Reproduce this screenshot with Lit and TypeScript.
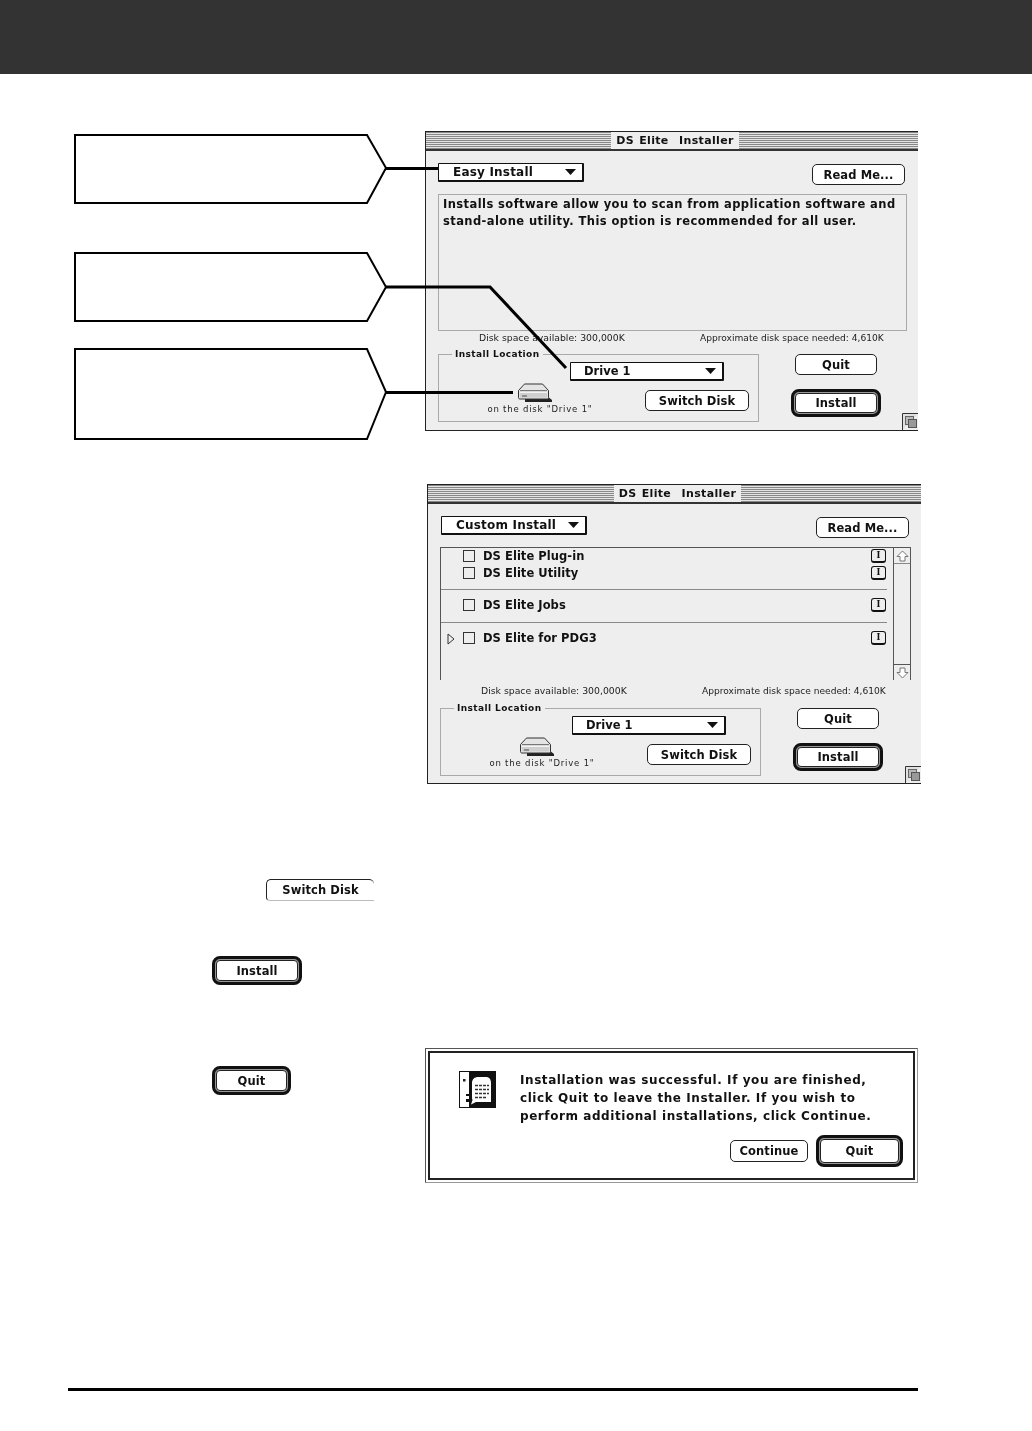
import { LitElement, html, css } from "lit";
import { customElement } from "lit/decorators.js";

const arrow = html`<svg class="caret" width="11" height="6" viewBox="0 0 11 6"><path d="M0 0H11L5.5 6Z" fill="#111"/></svg>`;

const driveIcon = html`<svg class="hd" width="36" height="20" viewBox="0 0 36 20">
  <path d="M30 13L35 17V19H8V15Z" fill="#222"/>
  <path d="M7 1.5C7 1 7.500 1 8 1H25.500L31.500 7.500V14.500C31.500 15.500 31 16 30 16H3C2 16 1.500 15.500 1.500 14.500V7.500Z" fill="#e4e4e4" stroke="#333"/>
  <path d="M3 7.500H30" stroke="#777"/>
  <path d="M3 8.500H30V14.500H3Z" fill="#cfcfcf"/>
  <path d="M3 9.500H30" stroke="#f4f4f4"/>
  <path d="M5 13H10" stroke="#777" stroke-width="1.500"/>
</svg>`;

const docIcon = html`<svg width="37" height="37" viewBox="0 0 37 37">
  <rect width="37" height="37" fill="#111"/>
  <path d="M1 1H10V23H7V25H10V28H7V31H10V36H1Z" fill="#fff"/>
  <rect x="4" y="8" width="2.500" height="2.500" fill="#222"/>
  <path d="M13 12C13 8 16 6 19 6H27C30 6 32 8 32 12V31H17L12 33.500L13.500 29C13 28 13 27 13 26Z" fill="#fff"/>
  <path d="M16 14.500H30M16 18.500H30M16 22.500H30M16 26.500H27" stroke="#333" stroke-dasharray="3 1" stroke-width="1.300"/>
</svg>`;

const growBox = html`<svg class="grow" width="16" height="17" viewBox="0 0 16 17">
  <path d="M0.500 17V0.500H16" fill="#e0e0e0" stroke="#333"/>
  <rect x="3.500" y="3.500" width="8" height="8" fill="#bbb" stroke="#666"/>
  <rect x="6.500" y="6.500" width="8" height="8" fill="#999" stroke="#555"/>
</svg>`;

const upArrow = html`<svg width="13" height="12" viewBox="0 0 13 12"><path d="M6.500 1L12 6.500H9V11H4V6.500H1Z" fill="#fff" stroke="#777"/></svg>`;
const downArrow = html`<svg width="13" height="12" viewBox="0 0 13 12"><path d="M6.500 11L12 5.500H9V1H4V5.500H1Z" fill="#fff" stroke="#777"/></svg>`;

@customElement("app-root")
export class AppRoot extends LitElement {
  static styles = css`
    :host { display: block; width: 1032px; height: 1431px; background: #fff; overflow: hidden;
      font-family: "DejaVu Sans", sans-serif; color: #111; }
    .header { height: 74px; background: #333; }
    .main { padding: 57px 0 0 68px; width: 850px; }

    .row1 { position: relative; display: flex; height: 300px; }
    .callouts { width: 357px; flex: none; display: flex; flex-direction: column; padding-top: 3px; align-self: flex-start; }
    .callout { display: block; flex: none; margin-left: 6px; }
    .c2 { margin-top: 47px; }
    .c3 { margin-top: 25px; }
    .lines { position: absolute; left: 0; top: 0; z-index: 2; pointer-events: none; }

    .window { position: relative; width: 493px; height: 300px; box-sizing: border-box; flex: none; background: #eee;
      border: 1px solid #222; border-right: 0; filter: blur(0.35px); }
    .w2 { margin: 53px 0 0 359px; width: 494px; }
    .title { height: 17px; border-bottom: 2px solid #333; display: flex; align-items: center; padding-left: 6px;
      background: repeating-linear-gradient(#888 0 1px, #e4e4e4 1px 2px); justify-content: center; }
    .title span { background: #eee; padding: 0 5px; font-weight: 700; font-size: 11px; letter-spacing: 0.35px; word-spacing: 1px; line-height: 17px; white-space: pre; }
    .body { padding: 12px 11px 0 12px; }
    .top { display: flex; justify-content: space-between; align-items: flex-start; height: 22px; }
    .popup { box-sizing: border-box; height: 19px; background: #fff; border: 1px solid #111; border-width: 1px 2px 2px 1px;
      border-radius: 1px; display: flex; align-items: center; justify-content: space-between;
      font-weight: 700; font-size: 12px; letter-spacing: 0.2px; }
    .p-easy { width: 146px; padding: 0 6px 0 14px; }
    .p-drive { width: 154px; padding: 0 6px 0 13px; font-size: 11.5px; letter-spacing: 0; }
    .caret { flex: none; }
    .btn { box-sizing: border-box; background: #fff; border: 1px solid #222; border-radius: 5px; display: flex;
      align-items: center; justify-content: center; font-weight: 700; font-size: 11.5px; letter-spacing: 0.1px; }
    .readme { width: 93px; height: 21px; margin: 1px 2px 0 0; }
    .w2 .top { padding-left: 1px; }
    .w2 .readme { margin-right: 1px; }
    .box { box-sizing: border-box; margin-top: 9px; height: 137px; width: 469px; border: 1.5px solid #aaa;
      padding: 1px 4px 0; font-weight: 700; font-size: 11.5px; line-height: 16.5px; letter-spacing: 0.42px; white-space: pre; }
    .stats { display: flex; height: 13px; margin-top: 1px; font-size: 9.3px; line-height: 13px; color: #222; padding-left: 41px; white-space: pre; }
    .stats .l { width: 221px; flex: none; margin-top: -1px; }
    .stats .r { font-size: 9.1px; }
    .bottom { display: flex; margin-top: 9px; }
    .w2 .bottom { margin-top: 10px; }
    .group { position: relative; box-sizing: border-box; width: 321px; height: 68px; border: 1.5px solid #aaa; flex: none; }
    .legend { position: absolute; left: 13px; top: -7px; padding: 0 3px; background: #eee; font-weight: 700; font-size: 9px; line-height: 12px; letter-spacing: 0.4px; }
    .g-top { display: flex; padding: 7px 0 0 131px; }
    .g-bot { display: flex; justify-content: space-between; padding: 2px 9px 0 48px; }
    .drive { width: 106px; display: flex; flex-direction: column; align-items: center; font-size: 8.5px; line-height: 12px; letter-spacing: 0.8px; color: #222; white-space: pre; }
    .hd { margin: 0 10px 0 0; }
    .switch { width: 104px; height: 21px; margin-top: 7px; }
    .side { display: flex; flex-direction: column; align-items: center; width: 90px; margin-left: 32px; }
    .quit { width: 82px; height: 21px; flex: none; }
    .ring { box-sizing: border-box; border: 3px solid #111; border-radius: 8px; background: #999; padding: 1px; display: flex; }
    .ring .btn { flex: 1; border-radius: 4px; }
    .install-ring { width: 90px; height: 28px; margin-top: 14px; flex: none; }
    .grow { position: absolute; right: 0; bottom: 0; }

    .list { box-sizing: border-box; position: relative; display: flex; margin-top: 9px; height: 133px; width: 471px; margin-bottom: 5px;
      border: 1.5px solid #555; border-width: 1.5px 1.5px 0; }
    .items { flex: 1; padding: 0 6px 0 0; }
    .grp { border-bottom: 1px solid #888; padding: 7px 0 8.5px; }
    .grp:first-child { padding: 0 0 7.5px; }
    .grp:last-child { border-bottom: 0; }
    .item { display: flex; align-items: center; height: 16.5px; padding-left: 22px; font-weight: 700; font-size: 11.5px; letter-spacing: 0.05px; position: relative; }
    .cb { width: 10px; height: 10px; border: 1px solid #333; background: #eee; margin-right: 8px; flex: none; }
    .info { margin-left: auto; width: 15px; height: 14px; box-sizing: border-box; border: 1.5px solid #111; border-bottom-width: 2.5px; border-radius: 3px; background: #eee;
      font-family: "Liberation Serif", serif; font-weight: 700; font-size: 10px; line-height: 10px; text-align: center; letter-spacing: 0; margin-right: 1px; flex: none; }
    .tri { position: absolute; left: 6px; top: 3px; }
    .scroll { width: 16px; flex: none; border-left: 1.5px solid #555; display: flex; flex-direction: column; justify-content: space-between; align-items: center; }
    .scroll div { width: 100%; height: 15px; display: flex; align-items: center; justify-content: center; }
    .scroll .u { border-bottom: 1px solid #888; }
    .scroll .d { border-top: 1px solid #555; }

    .row3 { padding-top: 95px; filter: blur(0.3px); }
    .switch-solo { box-sizing: border-box; width: 108px; height: 22px; margin-left: 198px; border: 1px solid #222; border-right: 0; border-bottom-color: #bbb; border-radius: 5px 5px 0 4px; }
    .install-solo { width: 90px; height: 29px; margin: 55px 0 0 144px; }
    .row4 { display: flex; margin-top: 63px; }
    .quit-solo { width: 79px; height: 29px; margin: 18px 0 0 144px; flex: none; filter: blur(0.3px); }
    .alert { box-sizing: border-box; width: 493px; height: 135px; margin-left: 134px; border: 1px solid #555; border-bottom-color: #999; border-right-color: #999; padding: 2px; flex: none; filter: blur(0.3px); }
    .alert-in { box-sizing: border-box; height: 100%; border: 2px solid #222; padding: 18px 10px 0 29px; position: relative; }
    .alert-msg { display: flex; }
    .alert-msg svg { flex: none; }
    .msg { margin-left: 24px; font-weight: 700; font-size: 12px; line-height: 18px; letter-spacing: 0.57px; white-space: pre; }
    .alert-btns { display: flex; justify-content: flex-end; align-items: center; gap: 8px; margin-top: 10px; }
    .cont { width: 78px; height: 22px; }
    .quit-big { width: 87px; height: 32px; }
    .rule { height: 3px; background: #000; margin-top: 205px; }
  `;

  private bottom(disk: string) {
    return html`
      <div class="stats"><span class="l">Disk space available: 300,000K</span><span class="r">Approximate disk space needed: 4,610K</span></div>
      <div class="bottom">
        <div class="group">
          <span class="legend">Install Location</span>
          <div class="g-top"><div class="popup p-drive">Drive 1 ${arrow}</div></div>
          <div class="g-bot">
            <div class="drive">${driveIcon}<span>on the disk "${disk}"</span></div>
            <div class="btn switch">Switch Disk</div>
          </div>
        </div>
        <div class="side">
          <div class="btn quit">Quit</div>
          <div class="ring install-ring"><div class="btn">Install</div></div>
        </div>
      </div>
      `;
  }

  private item(label: string, tri = false) {
    return html`<div class="item">
      ${tri ? html`<svg class="tri" width="8" height="12" viewBox="0 0 8 12"><path d="M1 1L7 6L1 11Z" fill="none" stroke="#333"/></svg>` : ""}
      <span class="cb"></span>${label}<span class="info">I</span>
    </div>`;
  }

  render() {
    return html`
      <div class="header"></div>
      <div class="main">
        <section class="row1">
          <div class="callouts">
            <svg class="callout" width="314" height="71" viewBox="0 0 314 71"><path d="M1 1H293L312 34L293 69H1Z" fill="#fff" stroke="#000" stroke-width="2"/></svg>
            <svg class="callout c2" width="314" height="71" viewBox="0 0 314 71"><path d="M1 1H293L312 35L293 69H1Z" fill="#fff" stroke="#000" stroke-width="2"/></svg>
            <svg class="callout c3" width="314" height="94" viewBox="0 0 314 94"><path d="M1 1H293L312 44L293 91H1Z" fill="#fff" stroke="#000" stroke-width="2"/></svg>
          </div>
          <div class="window">
            <div class="title"><span>DS Elite  Installer</span></div>
            <div class="body">
              <div class="top"><div class="popup p-easy">Easy Install ${arrow}</div><div class="btn readme">Read Me...</div></div>
              <div class="box">Installs software allow you to scan from application software and
stand-alone utility. This option is recommended for all user.</div>
              ${this.bottom("Drive 1")}
            </div>
            ${growBox}
          </div>
          <svg class="lines" width="520" height="300" viewBox="68 131 520 300">
            <path d="M386 168.500H438M386 287H490L566 368M386 392.500H513" fill="none" stroke="#000" stroke-width="3"/>
          </svg>
        </section>

        <div class="window w2">
          <div class="title"><span>DS Elite  Installer</span></div>
          <div class="body">
            <div class="top"><div class="popup p-easy">Custom Install ${arrow}</div><div class="btn readme">Read Me...</div></div>
            <div class="list">
              <div class="items">
                <div class="grp">${this.item("DS Elite Plug-in")}${this.item("DS Elite Utility")}</div>
                <div class="grp">${this.item("DS Elite Jobs")}</div>
                <div class="grp">${this.item("DS Elite for PDG3", true)}</div>
              </div>
              <div class="scroll"><div class="u">${upArrow}</div><div class="d">${downArrow}</div></div>
            </div>
            ${this.bottom("Drive 1")}
          </div>
          ${growBox}
        </div>

        <section class="row3">
          <div class="btn switch-solo">Switch Disk</div>
          <div class="ring install-solo"><div class="btn">Install</div></div>
        </section>

        <section class="row4">
          <div class="ring quit-solo"><div class="btn">Quit</div></div>
          <div class="alert">
            <div class="alert-in">
              <div class="alert-msg">${docIcon}<div class="msg">Installation was successful. If you are finished,
click Quit to leave the Installer. If you wish to
perform additional installations, click Continue.</div></div>
              <div class="alert-btns">
                <div class="btn cont">Continue</div>
                <div class="ring quit-big"><div class="btn">Quit</div></div>
              </div>
            </div>
          </div>
        </section>

        <div class="rule"></div>
      </div>
    `;
  }
}
